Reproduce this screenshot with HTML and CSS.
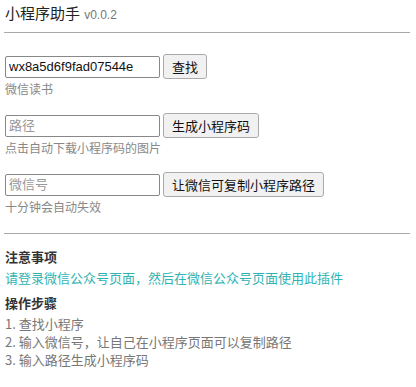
FILE: index.html
```html
<!DOCTYPE html>
<html lang="zh-CN">
<head>
  <meta charset="UTF-8" />
  <title>小程序助手</title>
  <link rel="stylesheet" href="styles.css">
</head>
<body>
  <div class="popup">
    <h1 class="title">小程序助手 <span class="version">v0.0.2</span></h1>
    <hr />

    <div class="group">
      <div class="row">
        <input type="text" value="wx8a5d6f9fad07544e" />
        <button>查找</button>
      </div>
      <div class="tip">微信读书</div>
    </div>

    <div class="group">
      <div class="row">
        <input type="text" placeholder="路径" />
        <button>生成小程序码</button>
      </div>
      <div class="tip">点击自动下载小程序码的图片</div>
    </div>

    <div class="group">
      <div class="row">
        <input type="text" placeholder="微信号" />
        <button>让微信可复制小程序路径</button>
      </div>
      <div class="tip">十分钟会自动失效</div>
    </div>

    <hr class="split" />

    <div class="notes">
      <h3>注意事项</h3>
      <p class="warn">请登录微信公众号页面，然后在微信公众号页面使用此插件</p>
      <h3>操作步骤</h3>
      <ol>
        <li>1. 查找小程序</li>
        <li>2. 输入微信号，让自己在小程序页面可以复制路径</li>
        <li>3. 输入路径生成小程序码</li>
      </ol>
    </div>
  </div>
</body>
</html>
```

FILE: styles.css
```css
* {
  box-sizing: border-box;
}

body {
  margin: 0;
  padding: 0 6px 0 5px;
  font-family: "Liberation Sans", "Noto Sans CJK SC", sans-serif;
  color: #222;
  background: #fff;
}

.title {
  margin: 0;
  padding-top: 4px;
  font-size: 15px;
  font-weight: normal;
  line-height: 20px;
  color: #222;
}

.version {
  font-size: 12px;
  color: #777;
}

hr {
  margin: 7px 0 0 -1px;
  border: none;
  border-top: 1px solid #aaa;
}

.group {
  margin-top: 21px;
}

.group + .group {
  margin-top: 16px;
}

.row {
  display: flex;
  align-items: center;
  gap: 3px;
}

input {
  width: 155px;
  height: 22px;
  padding: 0 3px;
  border: 1px solid #888;
  border-radius: 2px;
  font-family: "Liberation Sans", "Noto Sans CJK SC", sans-serif;
  font-size: 13px;
  color: #111;
}

input::placeholder {
  color: #999;
}

button {
  height: 25px;
  padding: 0 8px;
  border: 1px solid #aaa;
  border-radius: 3px;
  background: #f1f1f1;
  font-family: "Noto Sans CJK SC", sans-serif;
  font-size: 13px;
  color: #111;
}

.tip {
  margin-top: 2px;
  font-family: "Noto Sans CJK SC", sans-serif;
  font-size: 12px;
  line-height: 16px;
  color: #888;
}

.split {
  margin-top: 18px;
}

.notes {
  padding-top: 14px;
  font-family: "Noto Sans CJK SC", sans-serif;
  font-size: 13px;
  line-height: 18px;
}

.notes h3 {
  margin: 0;
  font-size: 13px;
  font-weight: bold;
  color: #333;
}

.warn {
  margin: 3px 0 7px;
  color: #2fb3b3;
}

ol {
  margin: 3px 0 0;
  padding: 0;
  list-style: none;
  color: #777;
}
```
